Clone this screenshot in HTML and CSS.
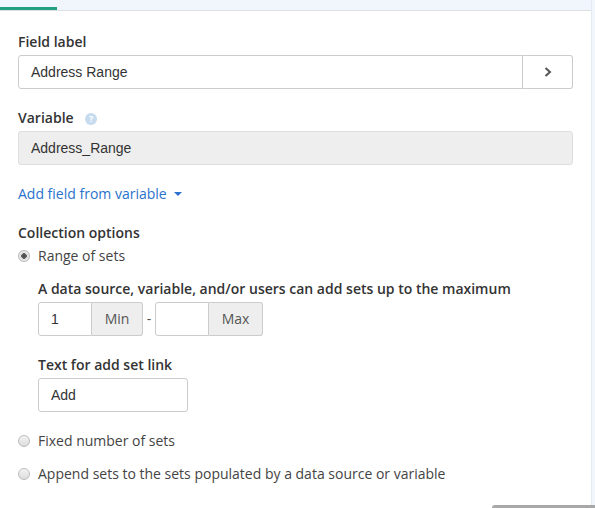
FILE: index.html
```html
<!DOCTYPE html>
<html lang="en">
<head>
  <meta charset="UTF-8">
  <meta name="viewport" content="width=device-width, initial-scale=1.0">
  <title>Field settings</title>
<link rel="stylesheet" href="styles.css">
</head>
<body>
  <div class="panel">
    <div class="tabs">
      <div class="tab active">Basic</div>
      <div class="tab">Advanced</div>
    </div>

    <div class="content">
      <div class="form-group">
        <label class="label">Field label</label>
        <div class="input-group">
          <input class="input grow" type="text" value="Address Range">
          <button class="addon-btn">
            <svg width="10" height="12" viewBox="0 0 10 12"><path d="M2.5 2 L7 6 L2.5 10" fill="none" stroke="#555" stroke-width="2"/></svg>
          </button>
        </div>
      </div>

      <div class="form-group">
        <label class="label">Variable <span class="help">?</span></label>
        <input class="input readonly" type="text" value="Address_Range" readonly>
      </div>

      <a class="link" href="#">Add field from variable <span class="caret"></span></a>

      <div class="section">
        <div class="label">Collection options</div>
        <label class="radio first"><span class="dot checked"></span>Range of sets</label>

        <div class="indent">
          <div class="label">A data source, variable, and/or users can add sets up to the maximum</div>
          <div class="range">
            <div class="input-group small">
              <input class="input" type="text" value="1">
              <span class="addon">Min</span>
            </div>
            <span class="dash">-</span>
            <div class="input-group small">
              <input class="input" type="text" value="">
              <span class="addon wide">Max</span>
            </div>
          </div>

          <div class="label spaced">Text for add set link</div>
          <input class="input add-text" type="text" value="Add">
        </div>

        <label class="radio fixed"><span class="dot"></span>Fixed number of sets</label>
        <label class="radio append"><span class="dot"></span>Append sets to the sets populated by a data source or variable</label>
      </div>
    </div>
  </div>
  <div class="footer-bar"></div>
</body>
</html>
```

FILE: styles.css
```css
html, body {
  margin: 0;
  padding: 0;
  height: 508px;
  overflow: hidden;
  background-color: #f1f6fd;
  font-family: "Open Sans", Arial, sans-serif;
  color: #333;
}

.panel {
  display: flow-root;
  width: 592px;
  height: 508px;
  background-color: #fff;
  border-right: 1px solid #e4eaf1;
  box-sizing: border-box;
}

.tabs {
  display: flex;
  height: 40px;
  margin-top: -29px;
  background-color: #f1f6fd;
  border-bottom: 1px solid #dcdfe4;
  box-sizing: border-box;
}

.tab {
  width: 57px;
  padding-top: 13px;
  font-size: 14px;
  font-weight: 600;
  text-align: center;
  color: #333;
  box-sizing: border-box;
}

.tab.active {
  border-bottom: 3px solid #22a07f;
}

.tab + .tab {
  width: auto;
  margin-left: 20px;
  font-weight: 400;
}

.content {
  padding: 21px 18px 0 18px;
  font-size: 14px;
  line-height: 20px;
}

.form-group {
  margin-bottom: 19px;
}

.label {
  display: block;
  font-size: 14px;
  font-weight: 600;
  line-height: 20px;
  margin-bottom: 3px;
}

.help {
  display: inline-block;
  width: 12px;
  height: 12px;
  margin-left: 8px;
  border-radius: 50%;
  background-color: #c6dbee;
  color: #fff;
  font-size: 9px;
  font-weight: 700;
  line-height: 12px;
  text-align: center;
  vertical-align: 1px;
}

.input-group {
  display: flex;
}

.input {
  height: 34px;
  padding: 0 12px;
  border: 1px solid #ccc;
  border-radius: 3px;
  font-family: "Liberation Sans", Arial, sans-serif;
  font-size: 14px;
  color: #333;
  box-sizing: border-box;
  outline: none;
  background-color: #fff;
}

.grow {
  flex: 1;
  border-radius: 3px 0 0 3px;
}

.readonly {
  width: 100%;
  background-color: #eee;
  border-color: #dedede;
}

.addon-btn {
  width: 50px;
  height: 34px;
  border: 1px solid #ccc;
  border-left: none;
  border-radius: 0 3px 3px 0;
  background-color: #fff;
  display: flex;
  align-items: center;
  justify-content: center;
  padding: 0;
}

.link {
  display: block;
  width: fit-content;
  font-size: 14px;
  line-height: 20px;
  color: #2a72cc;
  text-decoration: none;
}

.caret {
  display: inline-block;
  margin-left: 4px;
  border-left: 4px solid transparent;
  border-right: 4px solid transparent;
  border-top: 4px solid #2a72cc;
  vertical-align: 3px;
}

.section {
  margin-top: 19px;
}

.radio {
  display: flex;
  align-items: center;
  font-size: 14px;
  line-height: 20px;
  color: #444;
}

.radio.first {
  margin-top: 1px;
}

.dot {
  width: 12px;
  height: 12px;
  margin-right: 8px;
  border-radius: 50%;
  border: 1px solid #bbb;
  background: linear-gradient(#f4f4f4, #dcdcdc);
  box-sizing: border-box;
}

.dot.checked {
  background: radial-gradient(circle, #555 0 2.5px, #e6e6e6 3px);
}

.indent {
  padding-left: 20px;
  margin-top: 13px;
}

.range {
  display: flex;
  align-items: center;
  margin-top: 1px;
}

.small .input {
  width: 54px;
  border-radius: 3px 0 0 3px;
}

.addon {
  width: 51px;
  height: 34px;
  line-height: 32px;
  border: 1px solid #ccc;
  border-left: none;
  border-radius: 0 3px 3px 0;
  background-color: #eee;
  color: #555;
  font-size: 14px;
  text-align: center;
  box-sizing: border-box;
}

.addon.wide {
  width: 54px;
}

.dash {
  width: 12px;
  text-align: center;
  font-size: 14px;
  color: #555;
}

.spaced {
  margin-top: 19px;
}

.add-text {
  width: 150px;
}

.fixed {
  margin-top: 19px;
}

.append {
  margin-top: 13px;
}

.footer-bar {
  position: absolute;
  left: 492px;
  top: 505px;
  width: 110px;
  height: 10px;
  background-color: #a8a8a8;
  border-radius: 3px 0 0 0;
}
```
